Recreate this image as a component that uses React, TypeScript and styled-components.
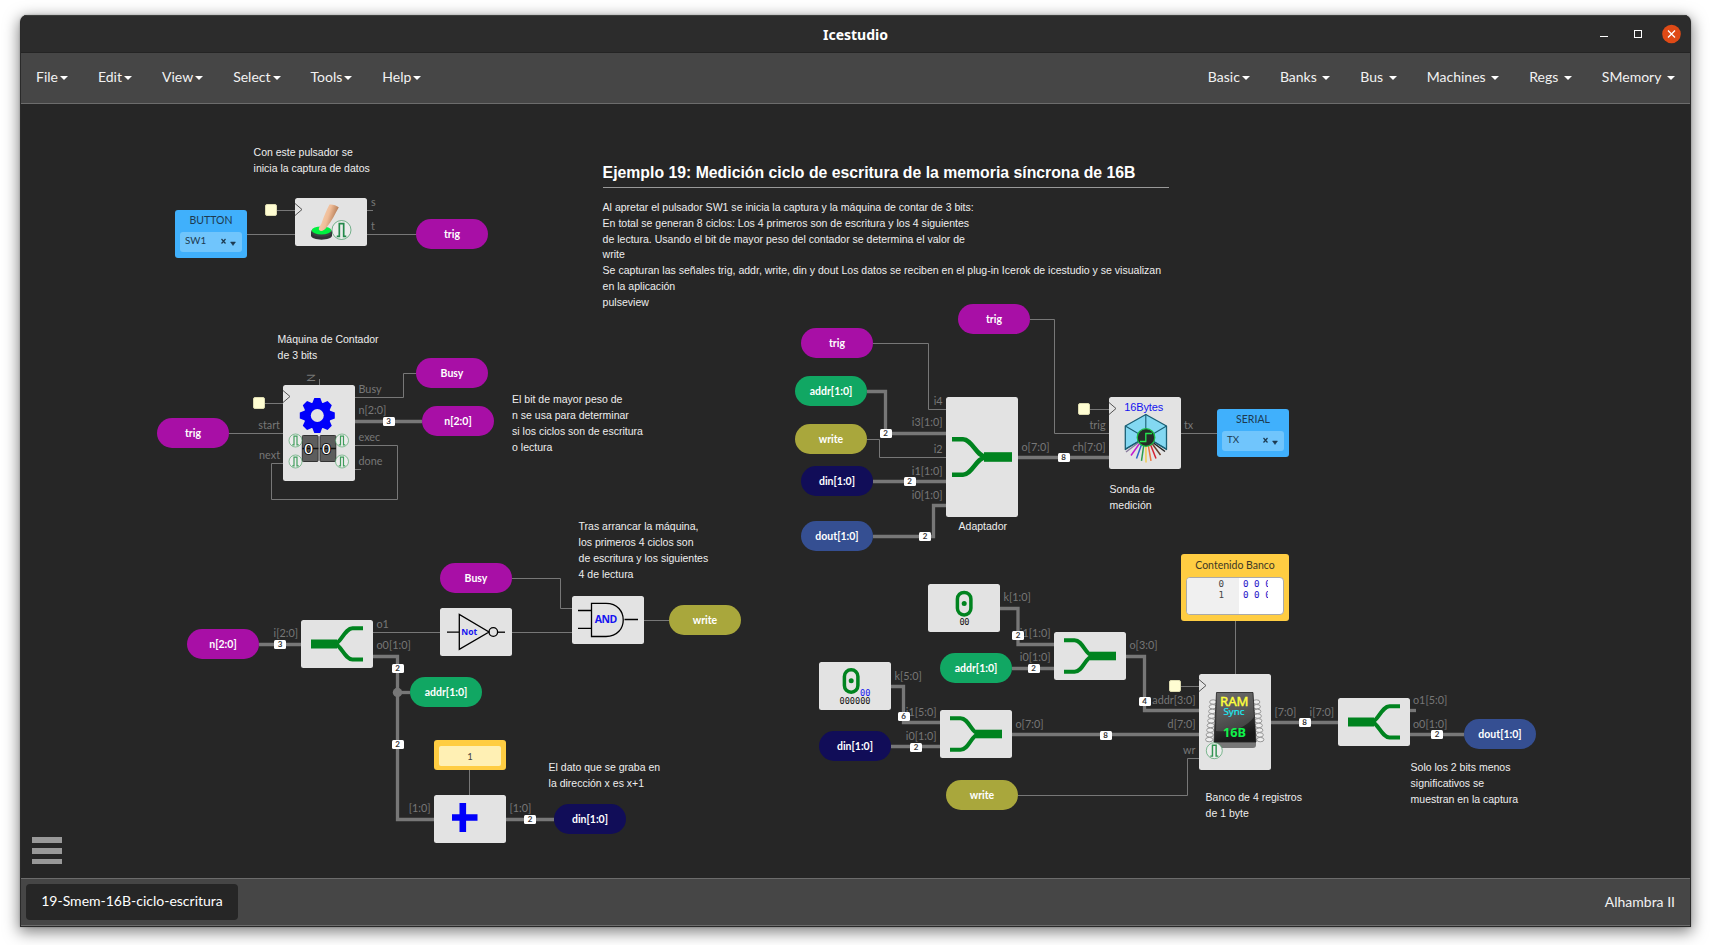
import React from "react";
import styled, { createGlobalStyle } from "styled-components";

const GlobalStyle = createGlobalStyle`
  * { box-sizing: border-box; }
  body { margin: 0; background: #fff; font-family: Lato, "Liberation Sans", sans-serif; }
`;

const C = {
  magenta: "#a80fa6",
  green: "#11a763",
  olive: "#a9a73c",
  navy: "#110d58",
  steel: "#354f92",
};

const Desktop = styled.div`
  height: 945px;
  overflow: hidden;
  padding: 15px 23px 18px 20px;
  background: #fff;
`;

const Window = styled.div`
  display: flex;
  flex-direction: column;
  height: 912px;
  border: 1px solid #2a2a2a;
  border-top: 0;
  border-radius: 7px 7px 0 0;
  overflow: hidden;
  background: #262626;
  box-shadow: 0 4px 15px 1px rgba(0, 0, 0, 0.5), 0 0 2px rgba(0, 0, 0, 0.3);
`;

const TitleBar = styled.header`
  flex: none;
  display: grid;
  grid-template-columns: 1fr auto 1fr;
  align-items: center;
  height: 38px;
  padding: 0 8px;
  background: #2c2c2c;
  border-top: 1px solid #3d3f3d;
  border-bottom: 1px solid #242424;
  color: #fff;
`;

const WindowTitle = styled.h2`
  grid-column: 2;
  margin: 0;
  padding-top: 1px;
  font: 700 14px/20px "Noto Sans", sans-serif;
`;

const WindowControls = styled.div`
  display: flex;
  justify-content: flex-end;
`;

const MenuBar = styled.nav`
  flex: none;
  display: flex;
  justify-content: space-between;
  height: 51px;
  background: #464646;
  border-bottom: 1px solid #6c6c6c;
`;

const MenuGroup = styled.div`
  display: flex;
`;

const MenuItem = styled.a<{ $spaced?: boolean }>`
  display: flex;
  align-items: center;
  padding: 0 15px 3px;
  color: #f2f2f2;
  font-size: 14px;
  line-height: 20px;
  &::after {
    content: "";
    margin-left: ${(p) => (p.$spaced ? 5.6 : 2)}px;
    margin-top: 2px;
    border: 4px solid transparent;
    border-top-color: #fff;
    border-bottom: 0;
  }
`;

const Canvas = styled.main`
  position: relative;
  flex: 1;
  overflow: hidden;
  background: #262626;
`;

/* Diagram space: its origin lies above and left of the visible canvas. */
const Sheet = styled.div`
  position: absolute;
  left: -21px;
  top: -104px;
  width: 1714px;
  height: 945px;
`;

const Drawing = styled.svg`
  position: absolute;
  inset: 0;
`;

const Footer = styled.footer`
  flex: none;
  display: flex;
  align-items: center;
  justify-content: space-between;
  height: 48px;
  padding: 0 15px 0 5px;
  background: #464646;
  border-top: 1px solid #6c6c6c;
  border-bottom: 1px solid #6c6c6c;
  color: #f2f2f2;
  font-size: 14px;
`;

const Tab = styled.div`
  height: 36px;
  width: 212px;
  line-height: 34px;
  text-align: center;
  border-radius: 4px;
  background: #262626;
  color: #fff;
`;

const BoardName = styled.div`
  padding-bottom: 2px;
`;

const MenuToggle = styled.button`
  position: absolute;
  left: 11px;
  top: 733px;
  display: flex;
  flex-direction: column;
  gap: 5px;
  width: 30px;
  padding: 0;
  border: 0;
  background: none;
  span { height: 6px; background: #999; }
  span:last-child { height: 5px; }
`;

const Placed = styled.div<{ $x: number; $y: number }>`
  position: absolute;
  left: ${(p) => p.$x}px;
  top: ${(p) => p.$y}px;
`;

const Pill = styled(Placed)<{ $c: string }>`
  width: 72px;
  height: 30px;
  border-radius: 15px;
  background: ${(p) => p.$c};
  color: #fff;
  font-size: 10.5px;
  font-weight: 700;
  line-height: 30px;
  text-align: center;
`;

const Block = styled(Placed)<{ $h?: number }>`
  width: 72px;
  height: ${(p) => p.$h ?? 48}px;
  border-radius: 2.5px;
  background: #e3e3e3;
  svg { display: block; }
`;

const IoBlock = styled(Placed)`
  width: 72px;
  height: 48px;
  padding: 4px 5px;
  border-radius: 3px;
  background: #40b0fc;
  color: #1d3a50;
  font-size: 10.5px;
  line-height: 13px;
  text-align: center;
`;

const IoSelect = styled.div`
  display: flex;
  align-items: center;
  height: 20px;
  margin-top: 5px;
  padding: 0 5px 3px 5px;
  border-radius: 3px;
  background: #70c5fc;
  font-size: 9.8px;
  span { flex: 1; text-align: left; }
`;

const ConstBlock = styled(Placed)`
  width: 72px;
  height: 30px;
  padding: 6px 5px 4px;
  border-radius: 3px;
  background: #ffcd42;
  div {
    height: 20px;
    border-radius: 2px;
    background: #fff0b4;
    color: #444;
    font-size: 9.5px;
    line-height: 21px;
    text-align: center;
  }
`;

const MemoryBlock = styled(Placed)`
  width: 108px;
  height: 67px;
  padding: 5px 5px;
  border-radius: 3px;
  background: #ffcd42;
  color: #3d3826;
  font-size: 10.5px;
  line-height: 13px;
  text-align: center;
`;

const MemoryEditor = styled.div`
  display: flex;
  height: 38px;
  margin-top: 5px;
  border: 1px solid #aaa;
  border-radius: 4px;
  overflow: hidden;
  background: #fff;
  font: 9.2px/11px "DejaVu Sans Mono", monospace;
`;

const Gutter = styled.div`
  width: 52px;
  padding-right: 15px;
  background: #f0f0f0;
  color: #444;
  text-align: right;
`;

const Cells = styled.div`
  width: 29px;
  padding-left: 4px;
  overflow: hidden;
  white-space: pre;
  text-align: left;
  color: #1b10c8;
`;

const Label = styled.span<{ $x: number; $y: number; $end?: boolean }>`
  position: absolute;
  left: ${(p) => p.$x}px;
  top: ${(p) => p.$y - 10}px;
  transform: ${(p) => (p.$end ? "translateX(-100%)" : "none")};
  color: #777;
  font-size: 10.8px;
  line-height: 12px;
  white-space: nowrap;
`;

const Badge = styled.span<{ $x: number; $y: number }>`
  position: absolute;
  left: ${(p) => p.$x - 6}px;
  top: ${(p) => p.$y - 4.5}px;
  width: 12px;
  height: 9px;
  border-radius: 1.5px;
  background: #fff;
  color: #333;
  font: 700 8px/9px Lato, sans-serif;
  text-align: center;
`;

const ClockPin = styled(Placed)`
  width: 12px;
  height: 12px;
  border: 1px solid #dcdab0;
  border-radius: 2px;
  background: #fffdd2;
`;

const Note = styled.p<{ $x: number; $y: number }>`
  position: absolute;
  left: ${(p) => p.$x - 0.4}px;
  top: ${(p) => p.$y - 12}px;
  margin: 0;
  color: #eee;
  font: 10.5px/16px "Liberation Sans", Arial, sans-serif;
  white-space: pre;
`;

const Article = styled(Placed)`
  width: 566px;
  color: #eee;
  font: 10.54px/16px "Liberation Sans", Arial, sans-serif;
  white-space: pre;
  h1 {
    margin: 0 0 11px;
    height: 24px;
    border-bottom: 1px solid #999;
    color: #fff;
    font-size: 15.81px;
    line-height: 18px;
  }
  p { margin: 0; }
  p + p { margin-top: -1px; }
`;

const WIRE = "#777";

const thinWires = [
  "M247 234.5H295", "M277 210.5H295", "M367 210.5H373", "M367 234.5H416",
  "M319.5 379V385", "M265 403.5H283", "M229 433.5H283",
  "M283 463.5H271.5V499.5H397.5V445.5H355", "M355 397.5H403.5V373.5H416", "M355 469.5H361",
  "M373 632.5H440", "M512 632.5H572", "M512 578.5H560.5V608.5H572", "M644 620.5H669", "M469.5 770V795",
  "M873 343.5H928.5V409.5H946", "M867 439.5H879.5V457.5H946",
  "M1030 319.5H1054.5V433.5H1109", "M1090 409.5H1109", "M1181 433.5H1217",
  "M1018 795.5H1187.5V758.5H1199", "M1181 686.5H1199", "M1235.5 620V674",
];

const busWires = [
  "M355 421.5H422", "M259 644.5H301", "M373 656.5H397.5V819.5H434", "M397 692.5H410", "M506 819.5H554",
  "M867 391.5H885.5V433.5H946", "M873 481.5H946", "M873 536.5H933.5V505.5H946", "M1018 457.5H1109",
  "M1000 608.5H1018V644.5H1054", "M1012 668.5H1054", "M1126 656.5H1144.5V710.5H1199",
  "M891 686.5H903.5V722.5H940", "M891 746.5H940", "M1012 734.5H1199", "M1271 722.5H1338",
  "M1410 710.5H1416", "M1410 734.5H1464",
];

const pills: [number, number, string, string][] = [
  [416, 219, "trig", C.magenta], [416, 358, "Busy", C.magenta], [422, 406, "n[2:0]", C.magenta],
  [157, 418, "trig", C.magenta], [187, 629, "n[2:0]", C.magenta], [440, 563, "Busy", C.magenta],
  [410, 677, "addr[1:0]", C.green], [669, 605, "write", C.olive], [554, 804, "din[1:0]", C.navy],
  [801, 328, "trig", C.magenta], [958, 304, "trig", C.magenta], [795, 376, "addr[1:0]", C.green],
  [795, 424, "write", C.olive], [801, 466, "din[1:0]", C.navy], [801, 521, "dout[1:0]", C.steel],
  [940, 653, "addr[1:0]", C.green], [819, 731, "din[1:0]", C.navy], [946, 780, "write", C.olive],
  [1464, 719, "dout[1:0]", C.steel],
];

const startLabels: [number, number, string][] = [
  [371, 206, "s"], [371, 230, "t"], [358.5, 393, "Busy"], [358.5, 414, "n[2:0]"], [358.5, 441, "exec"],
  [358.5, 465, "done"], [376.5, 628, "o1"], [376.5, 649, "o0[1:0]"], [509.5, 812, "[1:0]"],
  [1021.5, 451, "o[7:0]"], [1184, 429, "tx"], [1003.5, 601, "k[1:0]"], [1129.5, 649, "o[3:0]"],
  [894.5, 680, "k[5:0]"], [1015.5, 728, "o[7:0]"], [1274.5, 716, "[7:0]"],
  [1413, 704, "o1[5:0]"], [1413, 728, "o0[1:0]"],
];

const endLabels: [number, number, string][] = [
  [280, 429, "start"], [280, 459, "next"], [298, 637, "i[2:0]"], [430.5, 812, "[1:0]"],
  [942.5, 405, "i4"], [942.5, 426, "i3[1:0]"], [942.5, 453, "i2"], [942.5, 475, "i1[1:0]"],
  [942.5, 499, "i0[1:0]"], [1105.5, 451, "ch[7:0]"], [1105.5, 429, "trig"],
  [1050.5, 637, "i1[1:0]"], [1050.5, 661, "i0[1:0]"], [936.5, 716, "i1[5:0]"], [936.5, 740, "i0[1:0]"],
  [1195.5, 704, "addr[3:0]"], [1195.5, 728, "d[7:0]"], [1195.5, 754, "wr"], [1334, 716, "i[7:0]"],
];

const badges: [number, number, number][] = [
  [388.5, 421.5, 3], [280, 644.5, 3], [397.5, 668.5, 2], [397.5, 744, 2], [530, 819.5, 2],
  [885.5, 433.5, 2], [909.5, 481.5, 2], [925, 536.5, 2], [1063.5, 457.5, 8], [1018, 635.5, 2],
  [1033.5, 668.5, 2], [1144.5, 701.5, 4], [903.5, 716.5, 6], [916, 747, 2], [1105.5, 735, 8],
  [1304.5, 722.5, 8], [1437, 734.5, 2],
];

const notes: [number, number, string][] = [
  [254, 156, "Con este pulsador se\ninicia la captura de datos"],
  [278, 343, "Máquina de Contador\nde 3 bits"],
  [512.5, 403, "El bit de mayor peso de\nn se usa para determinar\nsi los ciclos son de escritura\no lectura"],
  [579, 530, "Tras arrancar la máquina,\nlos primeros 4 ciclos son\nde escritura y los siguientes\n4 de lectura"],
  [549, 771, "El dato que se graba en\nla dirección x es x+1"],
  [959, 530, "Adaptador"],
  [1110, 493, "Sonda de\nmedición"],
  [1206, 801, "Banco de 4 registros\nde 1 byte"],
  [1411, 771, "Solo los 2 bits menos\nsignificativos se\nmuestran en la captura"],
];

const Chevron = () => <path d="M0 5.5L7 11.5L0 17.5" fill="none" stroke="#555" />;

const Pulse = ({ x, y, r = 6.5, c = "#3f9d5c" }: { x: number; y: number; r?: number; c?: string }) => (
  <g fill="none" stroke={c}>
    <circle cx={x} cy={y} r={r} fill="#ececec" strokeWidth={0.6} />
    <path
      d={`M${x - r * 0.5} ${y + r * 0.68}h${r * 0.27}v${-r * 1.36}h${r * 0.46}v${r * 1.36}h${r * 0.27}`}
      strokeWidth={r * 0.18}
    />
  </g>
);

const Split = () => (
  <svg width="72" height="48" fill="none" stroke="#00831f">
    <path d="M10 24H36" strokeWidth="9" />
    <path d="M34 24C40 23 44 8.2 51.5 8.2H62M34 24C40 25 44 39.5 51.5 39.5H62" strokeWidth="4" />
  </svg>
);

const Join = ({ h = 48 }: { h?: number }) => (
  <svg width="72" height={h} fill="none" stroke="#00831f">
    {h > 48 ? (
      <>
        <path d="M38 60H66" strokeWidth="9.6" />
        <path d="M6 42.3H17C26 42.300 30 59 40 60M6 77.700H17C26 77.700 30 61 40 60" strokeWidth="4.600" />
      </>
    ) : (
      <>
        <path d="M36 24H62" strokeWidth="8.600" />
        <path d="M10 8.200H20.500C29 8.200 31 23 39 24M10 39.700H20.500C29 39.700 31 25 39 24" strokeWidth="4" />
      </>
    )}
  </svg>
);

const ButtonIcon = () => (
  <svg width="72" height="48">
    <defs>
      <linearGradient id="skin" x1="0" x2="1" y2="0.4">
        <stop offset="0" stopColor="#f7d9bd" />
        <stop offset="0.55" stopColor="#f0bd98" />
        <stop offset="1" stopColor="#a56b45" />
      </linearGradient>
    </defs>
    <Chevron />
    <path d="M16 34v3.5c0 5.5 21 5.5 21 0V34z" fill="#303235" />
    <ellipse cx="26.5" cy="34" rx="10.5" ry="4.8" fill="#3d4143" />
    <ellipse cx="26.5" cy="32.4" rx="9.7" ry="4" fill="#00f13f" />
    <path d="M34.5 6.5C38 6 41 7.5 43.8 9.3C40 16 37 23 31.5 29.5C29 33 25.5 34 24 31.8C23.2 30 25.5 28 26.8 24.5C29 18 31.5 12 34.5 6.5z" fill="url(#skin)" />
    <Pulse x={46.5} y={32} r={9.5} c="#23894a" />
  </svg>
);

const teeth = [0, 45, 90, 135, 180, 225, 270, 315];

const CounterIcon = () => (
  <svg width="72" height="96">
    <Chevron />
    <g fill="#0000fa" transform="translate(34.3 30.5)">
      {teeth.map((a) => (
        <path key={a} d="M-5.5 -11L-3 -17.5H3L5.5 -11z" transform={`rotate(${a})`} />
      ))}
      <circle r="13.5" />
      <circle r="6.5" fill="#e3e3e3" />
    </g>
    {[19.3, 37].map((x) => (
      <g key={x}>
        <rect x={x} y="50.5" width="15.8" height="26" rx="1" fill="#5d5d5d" stroke="#333" />
        <path d={`M${x} 63.5h16`} stroke="#111" strokeWidth="1.5" />
        <text x={x + 6.3} y="69.2" fill="#fff" stroke="#111" strokeWidth="2" paintOrder="stroke" fontFamily="Liberation Sans" fontSize="15.5" textAnchor="middle">0</text>
      </g>
    ))}
    <Pulse x={12.5} y={55.5} />
    <Pulse x={59} y={55.5} />
    <Pulse x={12.5} y={76.5} />
    <Pulse x={59} y={76.5} />
  </svg>
);

const NotIcon = () => (
  <svg width="72" height="48" fill="none" stroke="#000" strokeWidth="1.3">
    <path d="M7 24.2H19M19.3 6.5V41.3L49 24z" />
    <circle cx="53.3" cy="24" r="4.3" />
    <path d="M57.7 24.2H65" />
    <text x="21.3" y="27.3" textLength="16" fill="#1414f0" stroke="none" fontFamily="Open Sans" fontWeight="700" fontSize="8.5">Not</text>
  </svg>
);

const AndIcon = () => (
  <svg width="72" height="48" fill="none" stroke="#000" strokeWidth="1.3">
    <path d="M6 14.5H19.5M6 32.3H19.5M19.5 7.3V40.5H34C57 40.5 57 7.3 34 7.3zM52.5 23.5H66" />
    <text x="22.7" y="27.3" textLength="22.5" fill="#1414f0" stroke="none" fontFamily="Open Sans" fontWeight="700" fontSize="10.5">AND</text>
  </svg>
);

const PlusIcon = () => (
  <svg width="72" height="48">
    <path d="M18 22.5H43.5M28.8 8V37" fill="none" stroke="#0000fa" strokeWidth="6.6" />
  </svg>
);

const ZeroIcon = ({ wide }: { wide?: boolean }) => (
  <svg width="72" height="48" fontFamily="DejaVu Sans Mono" fontSize="8.6">
    <rect x={wide ? 25.4 : 29.4} y={wide ? 7.7 : 8.4} width="13.5" height="22.5" rx="6.7" fill="none" stroke="#00831f" strokeWidth="3.5" />
    <circle cx={wide ? 32.2 : 36.2} cy={wide ? 18.7 : 19.5} r="2.5" fill="#00831f" />
    {wide && <text x="41" y="33.5" fill="#1414f0">00</text>}
    <text x={wide ? 20.5 : 31.5} y={wide ? 42 : 41} fill="#111" textLength={wide ? 31 : 10}>{wide ? "000000" : "00"}</text>
  </svg>
);

const bristles: [number, number, string][] = [
  [17, 55, "#8a7c9e"], [22, 58.5, "#c31ad0"], [27.5, 61.5, "#2a62c8"], [32.5, 63.8, "#2b9d4e"],
  [37, 65.5, "#f0cc50"], [42, 63.8, "#ec7440"], [47, 61.5, "#d52030"], [51.5, 58, "#6b3e2c"], [56, 54.5, "#222"],
];

const ProbeIcon = () => (
  <svg width="72" height="72">
    <Chevron />
    <text x="15.2" y="14" fill="#1414f0" fontFamily="Liberation Sans" fontSize="11" textLength="39">16Bytes</text>
    {bristles.map(([x, y, c]) => (
      <path key={x} d={`M${36.8 + (x - 36.8) * 0.4} ${46}L${x} ${y}`} stroke={c} strokeWidth="1.5" />
    ))}
    <g stroke="#1a5f74" strokeWidth="1.3" strokeLinejoin="round">
      <path d="M36.8 17.5L57.5 29V52.5L36.8 40L16.3 52.5V29z" fill="#83d8f2" />
      <path d="M16.3 29L30 37M57.5 29L44 37M36.8 17V32M16.3 52L30 44M57.5 52L44 44" fill="none" strokeWidth="1.1" />
    </g>
    <circle cx="37" cy="40.5" r="8.8" fill="#252b28" stroke="#17bd42" strokeWidth="1.2" />
    <path d="M31 44.5H36.8V36.5H43" fill="none" stroke="#24e64e" strokeWidth="1.3" />
  </svg>
);

const coils = [0, 1, 2, 3, 4, 5, 6, 7, 8];

const RamIcon = () => (
  <svg width="72" height="96">
    <defs>
      <linearGradient id="chip" x1="0" y1="0" x2="0.3" y2="1">
        <stop offset="0" stopColor="#555" />
        <stop offset="0.5" stopColor="#3c3c3c" />
        <stop offset="1" stopColor="#191919" />
      </linearGradient>
    </defs>
    <Chevron />
    <g fill="#eee" stroke="#8d8d8d" strokeWidth="0.9">
      {coils.map((i) => (
        <g key={i}>
          <ellipse cx={14.2 - i * 0.5} cy={28 + i * 4.7} rx="3.6" ry="2.2" />
          <ellipse cx={57.3 + i * 0.5} cy={28 + i * 4.7} rx="3.6" ry="2.2" />
        </g>
      ))}
    </g>
    <path d="M15 67L57 67V71Q57 74 54 74H18Q15 74 15 71z" fill="#777" />
    <path d="M17.5 18.5H54L57 68H15z" fill="url(#chip)" stroke="#222" strokeWidth="0.8" />
    <path d="M18 19H53.5L55 43Q43 59 17 57z" fill="#fff" opacity="0.14" />
    <g fontFamily="Noto Sans">
      <text x="21" y="32.2" fill="#ffff3c" stroke="#ffff3c" strokeWidth="0.4" fontSize="12.3" textLength="28.5" lengthAdjust="spacingAndGlyphs">RAM</text>
      <text x="24.5" y="41" fill="#1be9f2" stroke="#1be9f2" strokeWidth="0.2" fontSize="9" textLength="21" lengthAdjust="spacingAndGlyphs">Sync</text>
      <text x="24" y="63" fill="#10f24b" fontWeight="700" fontSize="11.5" textLength="23" lengthAdjust="spacingAndGlyphs">16B</text>
    </g>
    <Pulse x={15.3} y={76.7} r={8} c="#2f9450" />
  </svg>
);

const leftMenu = ["File", "Edit", "View", "Select", "Tools", "Help"];
const rightMenu = ["Basic", "Banks", "Bus", "Machines", "Regs", "SMemory"];

const SelectMarks = () => (
  <svg width="18" height="10" fill="none" stroke="#1d3a50">
    <path d="M2.5 3L6.5 7.5M6.5 3L2.5 7.5" strokeWidth="1.2" />
    <path d="M11.5 6H16.5L14 9.5z" fill="#1d3a50" strokeWidth="0.5" />
  </svg>
);

export default function App() {
  return (
    <Desktop>
      <GlobalStyle />
      <Window>
        <TitleBar>
          <WindowTitle>Icestudio</WindowTitle>
          <WindowControls>
            <svg width="82" height="20" fill="none" stroke="#fff">
              <path d="M0 12.5H8" />
              <rect x="34.5" y="6.5" width="7" height="7" />
              <circle cx="71.5" cy="10" r="9.3" fill="#df4a16" stroke="none" />
              <path d="M68 6.5L75 13.5M75 6.5L68 13.5" strokeWidth="1.3" />
            </svg>
          </WindowControls>
        </TitleBar>
        <MenuBar>
          <MenuGroup>
            {leftMenu.map((m) => <MenuItem key={m}>{m}</MenuItem>)}
          </MenuGroup>
          <MenuGroup>
            {rightMenu.map((m, i) => <MenuItem key={m} $spaced={i > 0}>{m}</MenuItem>)}
          </MenuGroup>
        </MenuBar>
        <Canvas>
          <Sheet>
            <Drawing width="1714" height="945" fill="none" stroke={WIRE}>
              {thinWires.map((d) => <path key={d} d={d} />)}
              {busWires.map((d) => <path key={d} d={d} strokeWidth="3.3" />)}
              <circle cx="397.5" cy="692.5" r="4.7" fill={WIRE} stroke="none" />
              <text x="0" y="0" transform="translate(315 382) rotate(-90)" fill="#777" stroke="none" fontSize="10.7">N</text>
            </Drawing>

            {notes.map(([x, y, t]) => <Note key={t} $x={x} $y={y}>{t}</Note>)}
            <Article $x={602.6} $y={164}>
              <h1>Ejemplo 19: Medición ciclo de escritura de la memoria síncrona de 16B</h1>
              <p>{"Al apretar el pulsador SW1 se inicia la captura y la máquina de contar de 3 bits:\nEn total se generan 8 ciclos: Los 4 primeros son de escritura y los 4 siguientes\nde lectura. Usando el bit de mayor peso del contador se determina el valor de"}</p>
              <p>{"write\nSe capturan las señales trig, addr, write, din y dout Los datos se reciben en el plug-in Icerok de icestudio y se visualizan\nen la aplicación\npulseview"}</p>
            </Article>

            {startLabels.map(([x, y, t]) => <Label key={`${x}-${y}`} $x={x} $y={y}>{t}</Label>)}
            {endLabels.map(([x, y, t]) => <Label key={`${x}-${y}`} $x={x} $y={y} $end>{t}</Label>)}
            {badges.map(([x, y, n]) => <Badge key={`${x}-${y}`} $x={x} $y={y}>{n}</Badge>)}

            <ClockPin $x={265} $y={204} />
            <ClockPin $x={253} $y={397} />
            <ClockPin $x={1078} $y={403} />
            <ClockPin $x={1169} $y={680} />

            {pills.map(([x, y, t, c]) => <Pill key={`${x}-${y}`} $x={x} $y={y} $c={c}>{t}</Pill>)}

            <IoBlock $x={175} $y={210}>
              BUTTON
              <IoSelect><span>SW1</span><SelectMarks /></IoSelect>
            </IoBlock>
            <IoBlock $x={1217} $y={409}>
              SERIAL
              <IoSelect><span>TX</span><SelectMarks /></IoSelect>
            </IoBlock>

            <Block $x={295} $y={198}><ButtonIcon /></Block>
            <Block $x={283} $y={385} $h={96}><CounterIcon /></Block>
            <Block $x={301} $y={620}><Split /></Block>
            <Block $x={440} $y={608}><NotIcon /></Block>
            <Block $x={572} $y={596}><AndIcon /></Block>
            <Block $x={434} $y={795}><PlusIcon /></Block>
            <Block $x={946} $y={397} $h={120}><Join h={120} /></Block>
            <Block $x={1109} $y={397} $h={72}><ProbeIcon /></Block>
            <Block $x={928} $y={584}><ZeroIcon /></Block>
            <Block $x={819} $y={662}><ZeroIcon wide /></Block>
            <Block $x={1054} $y={632}><Join /></Block>
            <Block $x={940} $y={710}><Join /></Block>
            <Block $x={1199} $y={674} $h={96}><RamIcon /></Block>
            <Block $x={1338} $y={698}><Split /></Block>

            <ConstBlock $x={434} $y={740}><div>1</div></ConstBlock>
            <MemoryBlock $x={1181} $y={554}>
              Contenido Banco
              <MemoryEditor>
                <Gutter>0<br />1</Gutter>
                <Cells>{"0 0 0\n0 0 0"}</Cells>
              </MemoryEditor>
            </MemoryBlock>
          </Sheet>
          <MenuToggle aria-label="Menu"><span /><span /><span /></MenuToggle>
        </Canvas>
        <Footer>
          <Tab>19-Smem-16B-ciclo-escritura</Tab>
          <BoardName>Alhambra II</BoardName>
        </Footer>
      </Window>
    </Desktop>
  );
}
